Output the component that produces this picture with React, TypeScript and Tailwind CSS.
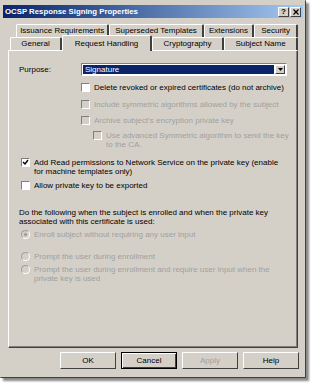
import { ReactNode } from "react";

const FONT = { fontFamily: '"Liberation Sans", Arial, sans-serif' };

function Check({ checked, disabled }: { checked?: boolean; disabled?: boolean }) {
  return (
    <span
      className={`flex h-[9px] w-[9px] shrink-0 items-center justify-center border border-t-[#808080] border-l-[#808080] border-r-white border-b-white ${
        disabled ? "bg-[#d4d0c8]" : "bg-white"
      }`}
    >
      {checked && (
        <svg width="7" height="7" viewBox="0 0 7 7">
          <path d="M1 3 L3 5 L6 1" stroke="#000" strokeWidth="1.4" fill="none" />
        </svg>
      )}
    </span>
  );
}

function Radio({ on }: { on?: boolean }) {
  return (
    <span className="flex h-[9px] w-[9px] shrink-0 items-center justify-center rounded-full border border-t-[#a0a0a0] border-l-[#a0a0a0] border-r-white border-b-white bg-[#d4d0c8]">
      {on && <span className="h-[3px] w-[3px] rounded-full bg-[#9a9a9a]" />}
    </span>
  );
}

function Row({
  box,
  children,
  disabled,
  className = "",
}: {
  box: ReactNode;
  children: ReactNode;
  disabled?: boolean;
  className?: string;
}) {
  return (
    <div className={`flex items-start gap-[4px] ${className}`}>
      {box}
      <span className={`whitespace-nowrap leading-[9px] ${disabled ? "text-[#a0a0a0]" : "text-black"}`}>
        {children}
      </span>
    </div>
  );
}

function Tab({ label, w, active }: { label: string; w: string; active?: boolean }) {
  return (
    <div
      className={`flex items-center justify-center whitespace-nowrap rounded-t-[2px] border-l border-t border-r-2 border-l-white border-t-white border-r-[#404040] bg-[#d4d0c8] ${w} ${
        active ? "relative z-10 -mt-[2px] -mb-[1px] h-[16px]" : "h-[13px]"
      }`}
    >
      {label}
    </div>
  );
}

function Btn({ label, def, disabled }: { label: string; def?: boolean; disabled?: boolean }) {
  return (
    <div
      className={`flex h-[17px] w-[56px] items-center justify-center bg-[#d4d0c8] ${
        def
          ? "border border-black shadow-[inset_1px_1px_0_#fff,inset_-1px_-1px_0_#404040]"
          : "border border-t-white border-l-white border-r-[#404040] border-b-[#404040]"
      } ${disabled ? "text-[#a0a0a0]" : "text-black"}`}
    >
      {label}
    </div>
  );
}

export default function App() {
  return (
    <div className="h-[384px] w-[313px] bg-white text-[8px]" style={FONT}>
      <div className="flex h-[378px] w-[306px] flex-col border border-t-[#d4d0c8] border-l-[#d4d0c8] border-r-[#404040] border-b-[#404040] bg-[#d4d0c8] p-[2px] shadow-[3px_3px_2px_#8a8a8a]">
        {/* title bar */}
        <div className="mt-[2px] flex h-[13px] items-center justify-between bg-gradient-to-r from-[#0a246a] to-[#a6caf0] px-[2px]">
          <span className="whitespace-nowrap text-[7.8px] font-bold text-white">OCSP Response Signing Properties</span>
          <div className="flex gap-[1px]">
            <span className="flex h-[10px] w-[11px] items-center justify-center border border-t-white border-l-white border-r-[#404040] border-b-[#404040] bg-[#d4d0c8] text-[8px] font-bold leading-none">
              ?
            </span>
            <span className="flex h-[10px] w-[11px] items-center justify-center border border-t-white border-l-white border-r-[#404040] border-b-[#404040] bg-[#d4d0c8]">
              <svg width="6" height="6" viewBox="0 0 6 6">
                <path d="M0.5 0.5 L5.5 5.5 M5.5 0.5 L0.5 5.5" stroke="#000" strokeWidth="1.3" />
              </svg>
            </span>
          </div>
        </div>

        {/* tabs */}
        <div className="mt-[6px] flex flex-col px-[5px]">
          <div className="ml-[8px] flex">
            <Tab label="Issuance Requirements" w="w-[94px]" />
            <Tab label="Superseded Templates" w="w-[95px]" />
            <Tab label="Extensions" w="w-[51px]" />
            <Tab label="Security" w="w-[44px]" />
          </div>
          <div className="ml-[2px] flex items-end">
            <Tab label="General" w="w-[52px]" />
            <Tab label="Request Handling" w="w-[90px]" active />
            <Tab label="Cryptography" w="w-[72px]" />
            <Tab label="Subject Name" w="w-[74px]" />
          </div>

          {/* panel */}
          <div className="flex h-[298px] flex-col border border-t-white border-l-white border-r-[#404040] border-b-[#404040] px-[10px] pt-[12px] shadow-[inset_-1px_-1px_0_#808080]">
            <div className="flex items-center">
              <span className="w-[62px]">Purpose:</span>
              <div className="flex h-[13px] flex-1 items-center border border-t-[#808080] border-l-[#808080] border-r-white border-b-white bg-white p-[1px]">
                <span className="flex h-full flex-1 items-center bg-[#0a246a] pl-[2px] text-white">Signature</span>
                <span className="ml-[1px] flex h-full w-[10px] items-center justify-center border border-t-white border-l-white border-r-[#404040] border-b-[#404040] bg-[#d4d0c8]">
                  <svg width="5" height="3" viewBox="0 0 5 3">
                    <path d="M0 0 H5 L2.5 3 Z" fill="#000" />
                  </svg>
                </span>
              </div>
            </div>

            <div className="ml-[62px] mt-[7px] flex flex-col">
              <Row box={<Check />}>Delete revoked or expired certificates (do not archive)</Row>
              <Row box={<Check disabled />} disabled className="mt-[8px]">
                Include symmetric algorithms allowed by the subject
              </Row>
              <Row box={<Check disabled />} disabled className="mt-[7px]">
                Archive subject's encryption private key
              </Row>
              <Row box={<Check disabled />} disabled className="ml-[12px] mt-[6px]">
                Use advanced Symmetric algorithm to send the key
                <br />
                to the CA.
              </Row>
            </div>

            <Row box={<Check checked />} className="ml-[2px] mt-[9px] items-center">
              Add Read permissions to Network Service on the private key (enable
              <br />
              for machine templates only)
            </Row>
            <Row box={<Check />} className="ml-[2px] mt-[5px]">
              Allow private key to be exported
            </Row>

            <div className="mt-[18px] whitespace-nowrap leading-[9px]">
              Do the following when the subject is enrolled and when the private key
              <br />
              associated with this certificate is used:
            </div>

            <div className="ml-[2px] mt-[4px] flex flex-col">
              <Row box={<Radio on />} disabled>
                Enroll subject without requiring any user input
              </Row>
              <Row box={<Radio />} disabled className="mt-[13px]">
                Prompt the user during enrollment
              </Row>
              <Row box={<Radio />} disabled className="mt-[4px] items-center">
                Prompt the user during enrollment and require user input when the
                <br />
                private key is used
              </Row>
            </div>
          </div>
        </div>

        {/* buttons */}
        <div className="mt-[4px] flex justify-end gap-[5px] pr-[4px]">
          <Btn label="OK" />
          <Btn label="Cancel" def />
          <Btn label="Apply" disabled />
          <Btn label="Help" />
        </div>
      </div>
    </div>
  );
}
